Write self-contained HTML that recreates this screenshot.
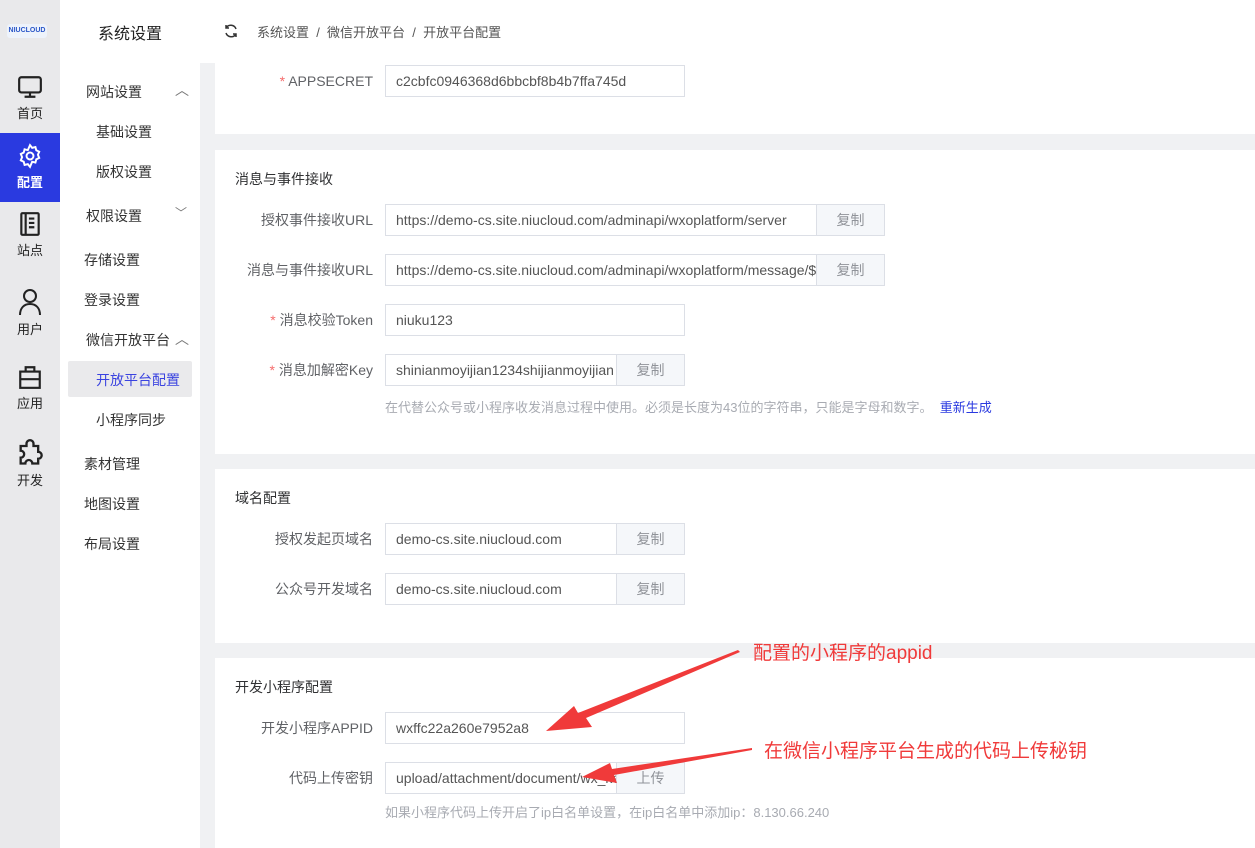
<!DOCTYPE html><html><head><meta charset="utf-8"><style>
*{margin:0;padding:0;box-sizing:border-box}
body{width:1255px;height:848px;overflow:hidden;position:relative;background:#fff;font-family:"Liberation Sans","Noto Sans CJK SC",sans-serif;font-size:14px;color:#333}
.a{position:absolute}
.rail{left:0;top:0;width:60px;height:848px;background:#e9e9eb}
.ri{position:absolute;left:0;width:60px;height:70px;text-align:center;font-size:13px;color:#222}
.ri svg{display:block;margin:0 auto 3px}
.sub{left:60px;top:0;width:140px;height:848px;background:#fff}
.m{position:absolute;font-size:14px;color:#333}
.bg{left:200px;top:63px;width:1055px;height:785px;background:#f0f1f3}
.card{position:absolute;left:215px;width:1040px;background:#fff}
.lbl{position:absolute;right:882px;font-size:14px;color:#606266;text-align:right;white-space:nowrap;line-height:32px}
.req{color:#f56c6c}
.in{position:absolute;left:385px;height:32px;border:1px solid #dcdfe6;padding-left:10px;line-height:30px;font-size:14px;color:#555;white-space:nowrap;overflow:hidden;background:#fff}
.btn{position:absolute;height:32px;border:1px solid #dcdfe6;background:#f5f7fa;color:#909399;text-align:center;line-height:30px;font-size:14px}
.h{position:absolute;left:235px;font-size:14px;color:#303133}
.tip{position:absolute;left:385px;font-size:13px;color:#a8abb2;white-space:nowrap}
.red{position:absolute;color:#f03a3a;font-size:19px;white-space:nowrap}
</style></head><body>
<div class="a rail"></div>
<div class="a" style="left:7px;top:24px;width:40px;height:14px;background:#eef3fb;border-radius:3px;font-size:7px;font-weight:bold;color:#2b57c8;line-height:14px;text-align:center">NIUCLOUD</div>
<div class="ri" style="top:74px"><svg width="26" height="26" viewBox="0 0 24 24" fill="none" stroke="#222" stroke-width="2"><rect x="2" y="3" width="20" height="14" rx="2"/><path d="M12 17v4M7 21h10"/></svg>首页</div>
<div class="ri" style="top:133px;height:69px;background:#2a3ae0;color:#fff;padding-top:10px;font-weight:bold"><svg width="26" height="26" viewBox="0 0 24 24" fill="none" stroke="#fff" stroke-width="1.8"><circle cx="12" cy="12" r="3.2"/><path d="M12 2l2 2.5 3-.8.8 3 2.7 1.3-1.2 2.9 1.2 2.9-2.7 1.3-.8 3-3-.8L12 22l-2-2.5-3 .8-.8-3L3.5 16l1.2-3-1.2-2.9L6.2 8.8l.8-3 3 .8z"/></svg>配置</div>
<div class="ri" style="top:211px"><svg width="26" height="26" viewBox="0 0 24 24" fill="none" stroke="#222" stroke-width="2"><rect x="4" y="2" width="16" height="20" rx="1"/><path d="M8 2v20M11 7h5M11 11h5M11 15h5"/></svg>站点</div>
<div class="ri" style="top:288px"><svg width="26" height="28" viewBox="0 0 24 28" fill="none" stroke="#222" stroke-width="2"><circle cx="12" cy="8" r="6"/><path d="M2 27c0-7 4-11 10-11s10 4 10 11"/></svg>用户</div>
<div class="ri" style="top:364px"><svg width="26" height="26" viewBox="0 0 24 24" fill="none" stroke="#222" stroke-width="2"><rect x="3" y="7" width="18" height="15"/><path d="M8 7V3h8v4M3 14h18"/></svg>应用</div>
<div class="ri" style="top:439px"><svg width="28" height="28" viewBox="0 0 24 24" fill="none" stroke="#222" stroke-width="2"><path d="M9 4a3 3 0 016 0v2h4v5a3 3 0 010 6v4h-5a3 3 0 00-6 0H4v-5a3 3 0 000-6V6h5z"/></svg>开发</div>
<div class="a sub"></div>
<div class="m" style="left:98px;top:20px;font-size:16px;color:#222">系统设置</div>
<div class="m" style="left:86px;top:82px">网站设置</div><div class="m" style="left:175px;top:80px;color:#777">︿</div>
<div class="m" style="left:96px;top:122px">基础设置</div>
<div class="m" style="left:96px;top:162px">版权设置</div>
<div class="m" style="left:86px;top:206px">权限设置</div><div class="m" style="left:175px;top:204px;color:#777;font-size:12px">﹀</div>
<div class="m" style="left:84px;top:250px">存储设置</div>
<div class="m" style="left:84px;top:290px">登录设置</div>
<div class="m" style="left:86px;top:330px">微信开放平台</div><div class="m" style="left:175px;top:329px;color:#777">︿</div>
<div class="a" style="left:68px;top:361px;width:124px;height:36px;background:#eaeaec;border-radius:2px"></div>
<div class="m" style="left:96px;top:370px;color:#3a43e0">开放平台配置</div>
<div class="m" style="left:96px;top:410px">小程序同步</div>
<div class="m" style="left:84px;top:454px">素材管理</div>
<div class="m" style="left:84px;top:494px">地图设置</div>
<div class="m" style="left:84px;top:534px">布局设置</div>
<svg class="a" style="left:223px;top:23px" width="16" height="16" viewBox="0 0 16 16" fill="none" stroke="#333" stroke-width="1.5"><path d="M13 6A5.5 5.5 0 003 5M3 10a5.5 5.5 0 0010 1M3 2v3h3M13 14v-3h-3"/></svg>
<div class="m" style="left:257px;top:22px;font-size:13px;color:#555">系统设置 &nbsp;/&nbsp; 微信开放平台 &nbsp;/&nbsp; 开放平台配置</div>
<div class="a bg"></div>
<div class="card" style="top:63px;height:71px"></div>
<div class="card" style="top:150px;height:304px"></div>
<div class="card" style="top:469px;height:174px"></div>
<div class="card" style="top:658px;height:190px"></div>
<div class="lbl" style="top:65px"><span class="req">*</span> APPSECRET</div>
<div class="in" style="top:65px;width:300px">c2cbfc0946368d6bbcbf8b4b7ffa745d</div>
<div class="h" style="top:169px">消息与事件接收</div>
<div class="lbl" style="top:204px">授权事件接收URL</div>
<div class="in" style="top:204px;width:432px">https://demo-cs.site.niucloud.com/adminapi/wxoplatform/server</div><div class="btn" style="left:816px;top:204px;width:69px">复制</div>
<div class="lbl" style="top:254px">消息与事件接收URL</div>
<div class="in" style="top:254px;width:432px">https://demo-cs.site.niucloud.com/adminapi/wxoplatform/message/$APPID$</div><div class="btn" style="left:816px;top:254px;width:69px">复制</div>
<div class="lbl" style="top:304px"><span class="req">*</span> 消息校验Token</div>
<div class="in" style="top:304px;width:300px">niuku123</div>
<div class="lbl" style="top:354px"><span class="req">*</span> 消息加解密Key</div>
<div class="in" style="top:354px;width:232px">shinianmoyijian1234shijianmoyijian</div><div class="btn" style="left:616px;top:354px;width:69px">复制</div>
<div class="tip" style="top:397px">在代替公众号或小程序收发消息过程中使用。必须是长度为43位的字符串，只能是字母和数字。 <span style="color:#2a3ae0">&nbsp;重新生成</span></div>
<div class="h" style="top:488px">域名配置</div>
<div class="lbl" style="top:523px">授权发起页域名</div>
<div class="in" style="top:523px;width:232px">demo-cs.site.niucloud.com</div><div class="btn" style="left:616px;top:523px;width:69px">复制</div>
<div class="lbl" style="top:573px">公众号开发域名</div>
<div class="in" style="top:573px;width:232px">demo-cs.site.niucloud.com</div><div class="btn" style="left:616px;top:573px;width:69px">复制</div>
<div class="h" style="top:677px">开发小程序配置</div>
<div class="lbl" style="top:712px">开发小程序APPID</div>
<div class="in" style="top:712px;width:300px">wxffc22a260e7952a8</div>
<div class="lbl" style="top:762px">代码上传密钥</div>
<div class="in" style="top:762px;width:232px">upload/attachment/document/wx_key.key</div><div class="btn" style="left:616px;top:762px;width:69px">上传</div>
<div class="tip" style="top:802px">如果小程序代码上传开启了ip白名单设置，在ip白名单中添加ip：8.130.66.240</div>
<div class="red" style="left:753px;top:638px">配置的小程序的appid</div>
<div class="red" style="left:764px;top:736px">在微信小程序平台生成的代码上传秘钥</div>
<svg class="a" style="left:0;top:0" width="1255" height="848"><polygon points="738,650 740,652 586,718 592,727 546,731 574,706 578,713" fill="#f03a3a"/><polygon points="752,748 752,750 614,775 617,783 582,777 610,763 612,769" fill="#f03a3a"/></svg>
</body></html>
